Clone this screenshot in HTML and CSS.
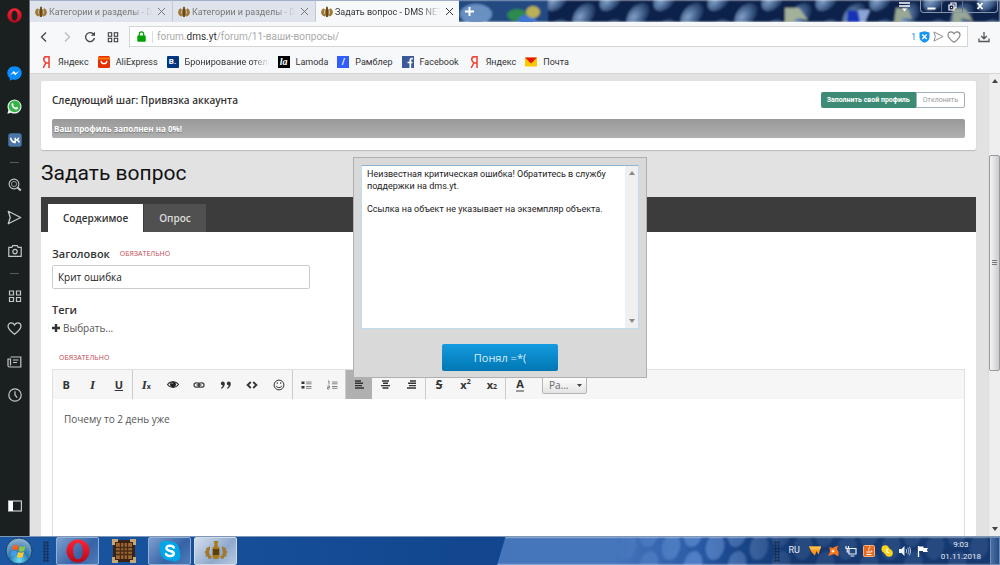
FILE: index.html
```html
<!DOCTYPE html>
<html lang="ru">
<head>
<meta charset="utf-8">
<title>Задать вопрос - DMS NETWORK</title>
<link rel="stylesheet" href="styles.css">
</head>
<body>
<svg class="defs" width="0" height="0" aria-hidden="true">
  <defs>
    <symbol id="laurel" viewBox="0 0 12 12"><path d="M2.600 2.200C1 3 .1 4.500.1 6.200c0 2.300 1.400 3.900 3.600 4.200l.6-1.200C3.600 8.300 3.400 7.200 3.400 6c0-1 .2-1.800.5-2.600zM9.400 2.200c1.600.8 2.500 2.300 2.500 4 0 2.300-1.400 3.900-3.600 4.200l-.6-1.200c.7-.9.9-2 .9-3.200 0-1-.2-1.800-.5-2.600z" fill="#a07a34"/><path d="M5.200.8h1.600l.2 2 .7 1.200v5L6.800 11H5.200l-.9-2V4L5 2.800z" fill="#6b4a12"/></symbol>
    <symbol id="close" viewBox="0 0 9 9"><path d="M1 1l7 7M8 1L1 8" stroke="currentColor" fill="none"/></symbol>
    <symbol id="grid" viewBox="0 0 14 14"><path d="M1.500 2h4v4h-4zM8.500 2h4v4h-4zM1.500 8.500h4v4h-4zM8.500 8.500h4v4h-4z" fill="none" stroke="currentColor" stroke-width="1.200"/></symbol>
    <symbol id="send" viewBox="0 0 14 14"><path d="M1.200 1.200L12.800 7 1.200 12.800 3 7z" fill="none" stroke="currentColor" stroke-width="1.200" stroke-linejoin="round"/></symbol>
    <symbol id="heart" viewBox="0 0 14 14"><path d="M7 12.300C3.500 9.700 1 7.700 1 4.900 1 3 2.300 1.800 3.900 1.800 5.300 1.800 6.300 2.500 7 3.700c.7-1.200 1.700-1.900 3.100-1.900C11.700 1.800 13 3 13 4.900c0 2.800-2.500 4.800-6 7.400z" fill="none" stroke="currentColor" stroke-width="1.200"/></symbol>
    <linearGradient id="operaRed" x1="0" y1="0" x2="0" y2="1"><stop offset="0" stop-color="#ff2436"/><stop offset="1" stop-color="#b5091b"/></linearGradient>
    <symbol id="opera" viewBox="0 0 24 24"><path fill-rule="evenodd" d="M12 .5a11.500 11.500 0 1 0 0 23 11.500 11.500 0 0 0 0-23zM12 3.800c3 0 4.700 3.700 4.700 8.200s-1.700 8.200-4.700 8.200S7.300 16.500 7.300 12 9 3.800 12 3.800z" fill="url(#operaRed)"/></symbol>
    <radialGradient id="ball" cx=".35" cy=".4" r=".65"><stop offset="0" stop-color="#86a1c6"/><stop offset=".5" stop-color="#4c6c97"/><stop offset="1" stop-color="#1d3560"/></radialGradient>
    <pattern id="balls" width="54" height="32" patternUnits="userSpaceOnUse">
      <rect width="54" height="32" fill="#10244c"/>
      <ellipse cx="14" cy="15" rx="14" ry="9" transform="rotate(-48 14 15)" fill="url(#ball)"/>
      <ellipse cx="41" cy="-1" rx="14" ry="9" transform="rotate(-48 41 -1)" fill="url(#ball)"/>
      <ellipse cx="41" cy="31" rx="14" ry="9" transform="rotate(-48 41 31)" fill="url(#ball)"/>
    </pattern>
    <pattern id="blobs" width="44" height="30" patternUnits="userSpaceOnUse">
      <rect width="44" height="30" fill="#1d4f9c"/>
      <ellipse cx="11" cy="10" rx="9" ry="13" transform="rotate(12 11 10)" fill="#5583c9"/>
      <ellipse cx="33" cy="-3" rx="9" ry="13" transform="rotate(12 33 -3)" fill="#5583c9"/>
      <ellipse cx="33" cy="27" rx="9" ry="13" transform="rotate(12 33 27)" fill="#5583c9"/>
    </pattern>
    <linearGradient id="barBlue"><stop offset="0" stop-color="#1b57a2"/><stop offset=".9" stop-color="#12478f"/></linearGradient>
    <linearGradient id="haze"><stop offset="0" stop-color="#4474ba"/><stop offset=".5" stop-color="#4474ba"/><stop offset="1" stop-color="#4474ba" stop-opacity="0"/></linearGradient>
    <linearGradient id="night"><stop offset="0" stop-color="#12305f" stop-opacity="0"/><stop offset="1" stop-color="#12305f" stop-opacity=".7"/></linearGradient>
    <filter id="soft"><feGaussianBlur stdDeviation="1"/></filter>
  </defs>
</svg>

<div class="window">
  <nav class="rail" aria-label="Боковая панель">
    <button class="rail-logo" aria-label="Opera"><svg width="15" height="15"><use href="#opera"/></svg></button>
    <button aria-label="Messenger"><svg width="15" height="15" viewBox="0 0 15 15"><path d="M7.500.3C3.400.3.300 3.200.300 7c0 2.100.9 3.900 2.400 5.100v2.600l2.300-1.300c.8.2 1.600.4 2.500.4 4.100 0 7.200-2.900 7.200-6.800S11.600.3 7.500.3z" fill="#0a8cff"/><path d="M2.900 9.200l3.900-4.100 2 2 3.400-2-3.900 4.100-2-2z" fill="#fff"/></svg></button>
    <button aria-label="WhatsApp"><svg width="15" height="15" viewBox="0 0 15 15"><path d="M.4 14.700l1-3.700A7 7 0 1 1 4.100 13.700z" fill="#e9f5ea"/><circle cx="7.600" cy="7.300" r="5.900" fill="#35b44a"/><path d="M5.200 4.100c.5-.4.800-.2 1 .3l.4 1c.1.400-.5.800-.4 1.100.6 1.100 1.200 1.600 2.300 2.100.4.100.7-.8 1.100-.6l1.200.6c.5.300.100 1.300-.4 1.600-1.100.7-3 .1-4.300-1.200C4.700 7.600 3.900 5.400 5.200 4.100z" fill="#fff"/></svg></button>
    <button aria-label="ВКонтакте"><svg width="14" height="14" viewBox="0 0 14 14"><rect x=".3" y=".3" width="13.400" height="13.400" rx="2.500" fill="#4a76a8"/><path d="M2.500 4.700c.7 2.900 2 4.700 4.700 4.700V4.700M7.200 7.300c1.700-.1 3-1 3.600-2.600M7.200 6.800c2 0 3.400 1 4.200 2.700" stroke="#fff" stroke-width="1.500" fill="none"/></svg></button>
    <hr>
    <button aria-label="Поиск"><svg width="14" height="14" viewBox="0 0 14 14" fill="none" stroke="currentColor" stroke-width="1.100"><circle cx="6" cy="6" r="4.900"/><circle cx="6" cy="6" r="2.600" stroke-width=".7"/><path d="M9.500 9.500l3.300 3" stroke-width="2.200"/></svg></button>
    <button aria-label="Отправить"><svg width="15" height="15"><use href="#send"/></svg></button>
    <button aria-label="Снимок"><svg width="14" height="14" viewBox="0 0 14 14" fill="none" stroke="currentColor" stroke-width="1.200"><path d="M.8 3.300h3l1-1.600h4.400l1 1.600h3v9H.8z"/><circle cx="7" cy="7.600" r="2.200"/></svg></button>
    <hr>
    <button aria-label="Экспресс-панель"><svg width="14" height="14"><use href="#grid"/></svg></button>
    <button aria-label="Закладки"><svg width="15" height="15"><use href="#heart"/></svg></button>
    <button aria-label="Новости"><svg width="15" height="14" viewBox="0 0 15 14" fill="none" stroke="currentColor" stroke-width="1.200"><path d="M3.500 2h10.300v10H2.500C1.500 12 1 11.500 1 10.500V4h2.500v6.500M6 5h5.500M6 7.500h4"/></svg></button>
    <button aria-label="История"><svg width="14" height="14" viewBox="0 0 14 14" fill="none" stroke="currentColor" stroke-width="1.200"><circle cx="7" cy="7" r="6.200"/><path d="M7 3.200V7l2.300 2.600"/></svg></button>
    <button class="rail-end" aria-label="Панель"><svg width="14" height="12" viewBox="0 0 14 12"><rect x=".6" y="1" width="12.800" height="10" fill="none" stroke="currentColor" stroke-width="1.200"/><path d="M1 1h4v10H1z" fill="#fff"/></svg></button>
  </nav>

  <div class="browser">
    <header class="tabstrip">
      <svg class="wallpaper" width="100%" height="100%" aria-hidden="true"><g filter="url(#soft)"><rect width="100%" height="100%" fill="url(#balls)"/><rect x="420" width="98" height="22" fill="#204a80"/><ellipse cx="446" cy="14" rx="16" ry="10" fill="#6a90c2"/><ellipse cx="487" cy="15" rx="10" ry="6" fill="#2d8a4e"/><ellipse cx="497" cy="20" rx="9" ry="5" fill="#3f74d0"/><ellipse cx="503" cy="12" rx="7" ry="6" fill="#b9b056"/><path d="M755 8l14 0 9 12-10-2-8 5h-5z" fill="#a3b09a"/><path d="M866 8l12 1 4 10-10-2v6h-8z" fill="#98a894"/><path d="M923 9l12 0 8 12-12-3v5h-8z" fill="#98a894"/><path d="M818 10l9 1 3 11h-13z" fill="#1233b8"/><path d="M828 10h12l-5 12h-5z" fill="#8aa5d8"/></g></svg>
      <div class="tabs">
        <div class="tab"><svg width="12" height="12"><use href="#laurel"/></svg><a href="#">Категории и разделы - DI</a><button aria-label="Закрыть"><svg width="9" height="9"><use href="#close"/></svg></button></div>
        <div class="tab"><svg width="12" height="12"><use href="#laurel"/></svg><a href="#">Категории и разделы - DI</a><button aria-label="Закрыть"><svg width="9" height="9"><use href="#close"/></svg></button></div>
        <div class="tab tab-on"><svg width="12" height="12"><use href="#laurel"/></svg><a href="#">Задать вопрос - DMS NET</a><button aria-label="Закрыть"><svg width="9" height="9"><use href="#close"/></svg></button></div>
        <button class="newtab" aria-label="Новая вкладка"><svg width="9" height="9" viewBox="0 0 9 9"><path d="M4.500 0v9M0 4.500h9" stroke="#fff" stroke-width="2"/></svg></button>
      </div>
      <div class="winctl">
        <button class="menu" aria-label="Меню вкладок"><svg width="11" height="10" viewBox="0 0 11 10"><path d="M0 1h11M0 4h11" stroke="#fff" stroke-width="1.500"/><path d="M3 6.500h5L5.500 9.500z" fill="#fff"/></svg></button>
        <div class="winbtns">
          <button aria-label="Свернуть"><svg width="9" height="9" viewBox="0 0 9 9"><path d="M.5 6.500h8" stroke="#fff" stroke-width="2"/></svg></button>
          <button aria-label="Развернуть"><svg width="9" height="9" viewBox="0 0 9 9" fill="none" stroke="#fff" stroke-width="1.200"><path d="M1 3h5v5H1zM3 3V1h5v5H6M3 5.500h1"/></svg></button>
          <button class="wide" aria-label="Закрыть окно"><svg width="8" height="8" viewBox="0 0 8 8"><path d="M1.500 1l5 6M6.500 1l-5 6" stroke="#fff" stroke-width="1.800"/></svg></button>
        </div>
      </div>
    </header>

    <div class="navbar">
      <button aria-label="Назад"><svg width="12" height="12" viewBox="0 0 12 12"><path d="M8 1.500L3.500 6 8 10.500" fill="none" stroke="#444" stroke-width="1.300"/></svg></button>
      <button aria-label="Вперёд"><svg width="12" height="12" viewBox="0 0 12 12"><path d="M4 1.500L8.500 6 4 10.500" fill="none" stroke="#bbb" stroke-width="1.300"/></svg></button>
      <button aria-label="Обновить"><svg width="12" height="12" viewBox="0 0 12 12"><path d="M9.800 3.500A4.500 4.500 0 1 0 10.500 7" fill="none" stroke="#444" stroke-width="1.300"/><path d="M11 .8v4H7z" fill="#444"/></svg></button>
      <button aria-label="Экспресс-панель"><svg width="12" height="12"><use href="#grid"/></svg></button>
      <div class="urlbar">
        <svg width="9" height="11" viewBox="0 0 9 11"><path d="M2.300 5V3a2.200 2.200 0 0 1 4.400 0v2" fill="none" stroke="#00a000" stroke-width="1.200"/><rect x=".3" y="4.500" width="8.400" height="6.200" rx=".6" fill="#00a000"/></svg>
        <span class="url" role="textbox" aria-label="Адрес">forum.<b>dms.yt</b>/forum/11-ваши-вопросы/</span>
        <span class="blocked">1</span>
        <svg width="11" height="12" viewBox="0 0 11 12"><path d="M5.500.3l5 1.200v4.800c0 2.700-2.300 4.600-5 5.500-2.700-.9-5-2.800-5-5.500V1.500z" fill="#1696f0"/><path d="M3.300 3.500l4.400 4.400M7.700 3.500L3.300 7.900" stroke="#fff" stroke-width="1.400"/></svg>
        <svg class="gray" width="11" height="11"><use href="#send"/></svg>
        <svg class="gray" width="14" height="14"><use href="#heart"/></svg>
      </div>
      <button aria-label="Загрузки"><svg width="12" height="12" viewBox="0 0 12 12" fill="none" stroke="#555" stroke-width="1.300"><path d="M1 7.500v3h10v-3M6 1v6.500M3.200 5L6 7.800 8.800 5"/></svg></button>
    </div>

    <nav class="bookmarks" aria-label="Закладки">
      <a href="#"><svg width="12" height="12" viewBox="0 0 12 12"><path d="M9 12V.7H6.500c-1.700 0-2.800 1.200-2.800 2.900 0 1.600.9 2.300 2.200 3.200L3.200 12M9 7H6.300" fill="none" stroke="#f43b2f" stroke-width="1.500"/></svg>Яндекс</a>
      <a href="#"><svg width="12" height="12" viewBox="0 0 12 12"><rect width="12" height="12" rx="1.500" fill="#e62e04"/><path d="M0 1.500h12v2H0z" fill="#ff7a00"/><path d="M3 5c.8 3.600 5.200 3.600 6 0" fill="none" stroke="#fff" stroke-width="1.300"/></svg>AliExpress</a>
      <a href="#"><span class="ico booking">B.</span><span class="fade">Бронирование отеле</span></a>
      <a href="#"><span class="ico lamoda">la</span>Lamoda</a>
      <a href="#"><span class="ico rambler">/</span>Рамблер</a>
      <a href="#"><svg width="12" height="12" viewBox="0 0 12 12"><rect width="12" height="12" fill="#3b5998"/><path d="M8.300 12V3.900c0-.8.5-1.200 1.200-1.200h1.300M5.500 6.500h5" fill="none" stroke="#fff" stroke-width="1.700"/></svg>Facebook</a>
      <a href="#"><svg width="12" height="12" viewBox="0 0 12 12"><path d="M9 12V.7H6.500c-1.700 0-2.800 1.200-2.800 2.900 0 1.600.9 2.300 2.200 3.200L3.200 12M9 7H6.300" fill="none" stroke="#f43b2f" stroke-width="1.500"/></svg>Яндекс</a>
      <a href="#"><svg width="12" height="12" viewBox="0 0 12 12"><rect y="1.500" width="12" height="9" fill="#ffc800"/><path d="M0 1.500h12L6 7.500z" fill="#e61400"/></svg>Почта</a>
    </nav>

    <div class="viewport">
      <main class="page">
        <section class="card">
          <div class="card-head">
            <h2>Следующий шаг: Привязка аккаунта</h2>
            <div class="btns"><button class="fill">Заполнить свой профиль</button><button class="dismiss">Отклонить</button></div>
          </div>
          <div class="progress">Ваш профиль заполнен на 0%!</div>
        </section>

        <h1>Задать вопрос</h1>

        <div class="formtabs"><button class="on">Содержимое</button><button>Опрос</button></div>
        <form class="panel">
          <div class="field-head"><label for="title">Заголовок</label><span class="req">ОБЯЗАТЕЛЬНО</span></div>
          <input id="title" type="text" value="Крит ошибка">
          <div class="field-head tags">Теги</div>
          <a class="choose" href="#"><svg width="8" height="8" viewBox="0 0 8 8"><path d="M4 0v8M0 4h8" stroke="#333" stroke-width="2.400"/></svg>Выбрать...</a>
          <div class="req body-req">ОБЯЗАТЕЛЬНО</div>
          <div class="editor">
            <div class="tools">
              <div class="grp g3">
                <button type="button" aria-label="Полужирный"><b>B</b></button>
                <button type="button" aria-label="Курсив"><i class="serif">I</i></button>
                <button type="button" aria-label="Подчёркнутый"><u>U</u></button>
              </div>
              <div class="grp g6">
                <button type="button" aria-label="Очистить формат"><i class="serif">I</i><sub>x</sub></button>
                <button type="button" aria-label="Скрытый текст"><svg width="12" height="9" viewBox="0 0 12 9"><path d="M.5 4.500C3 .8 9 .8 11.500 4.500 9 8.200 3 8.200.5 4.500z" fill="none" stroke="#333" stroke-width="1.200"/><circle cx="6" cy="4.300" r="2.900" fill="#222"/><circle cx="5.200" cy="3.300" r=".8" fill="#999"/></svg></button>
                <button type="button" aria-label="Ссылка"><svg width="12" height="8" viewBox="0 0 12 8" fill="none" stroke="#444" stroke-width="1.300"><rect x="1" y="1.800" width="5.500" height="4.400" rx="2.200"/><rect x="5.500" y="1.800" width="5.500" height="4.400" rx="2.200"/><path d="M3.500 4h5"/></svg></button>
                <button type="button" aria-label="Цитата"><svg width="12" height="8" viewBox="0 0 12 8" fill="#333"><path d="M.8 2.400A1.900 1.900 0 1 1 4.800 2.800C4.700 5.100 3.500 6.900 1.400 7.800L.9 6.900C2.100 6.300 2.700 5.500 2.800 4.300 1.600 4.300.8 3.500.8 2.400zM6.800 2.400A1.900 1.900 0 1 1 10.800 2.800C10.700 5.100 9.500 6.900 7.400 7.800L6.900 6.900C8.100 6.300 8.700 5.500 8.800 4.300 7.600 4.300 6.800 3.500 6.800 2.400z"/></svg></button>
                <button type="button" aria-label="Код"><svg width="12" height="8" viewBox="0 0 12 8"><path d="M4.800 1L1.600 4l3.200 3M7.200 1l3.200 3-3.200 3" fill="none" stroke="#333" stroke-width="1.800"/></svg></button>
                <button type="button" aria-label="Смайлик"><svg width="12" height="12" viewBox="0 0 12 12" fill="none" stroke="#333"><circle cx="6" cy="6" r="4.900"/><path d="M3.200 6.800c.7 2.400 4.900 2.400 5.600 0M4.300 3.300v1.600M7.700 3.300v1.600"/></svg></button>
              </div>
              <div class="grp g2">
                <button type="button" aria-label="Список"><svg width="11" height="10" viewBox="0 0 11 10"><path d="M.5 1.500h3v2.500h-3zM.5 6h3v2.500h-3z" fill="#333"/><path d="M5 2h5.500M5 3.800h5.500M5 6.500h5.500M5 8.300h5.500" stroke="#666" stroke-width=".8"/></svg></button>
                <button type="button" aria-label="Нумерованный список"><svg width="11" height="10" viewBox="0 0 11 10" fill="none" stroke="#666" stroke-width=".8"><path d="M1 1h1v3.500M.5 6h2v1.500h-2V9h2M5 2h5.500M5 3.800h5.500M5 6.500h5.500M5 8.300h5.500"/></svg></button>
              </div>
              <div class="grp g3">
                <button type="button" class="pressed" aria-label="По левому краю"><svg width="9" height="9" viewBox="0 0 9 9"><path d="M0 1h6M0 3.300h8M0 5.600h7M0 8h9" stroke="#333" stroke-width="1.400"/></svg></button>
                <button type="button" aria-label="По центру"><svg width="9" height="9" viewBox="0 0 9 9"><path d="M1 1h7M2 3.300h5M0 5.600h9M1.500 8h6" stroke="#333" stroke-width="1.400"/></svg></button>
                <button type="button" aria-label="По правому краю"><svg width="9" height="9" viewBox="0 0 9 9"><path d="M3 1h6M1 3.300h8M2 5.600h7M0 8h9" stroke="#333" stroke-width="1.400"/></svg></button>
              </div>
              <div class="grp g3">
                <button type="button" aria-label="Зачёркнутый"><s>S</s></button>
                <button type="button" aria-label="Верхний индекс"><b>x</b><sup>2</sup></button>
                <button type="button" aria-label="Нижний индекс"><b>x</b><sub>2</sub></button>
              </div>
              <div class="grp g1">
                <button type="button" aria-label="Цвет"><span class="color">A</span></button>
              </div>
              <select class="size" aria-label="Размер"><option>Ра...</option></select>
            </div>
            <div class="text" contenteditable="true">Почему то 2 день уже</div>
          </div>
        </form>
      </main>
      <div class="scroll">
        <svg width="6" height="4" viewBox="0 0 6 4"><path d="M0 4h6L3 0z" fill="#444"/></svg>
        <div class="track"><div class="thumb"></div></div>
        <svg width="6" height="4" viewBox="0 0 6 4"><path d="M0 0h6L3 4z" fill="#444"/></svg>
      </div>
    </div>
  </div>
</div>

<footer class="taskbar">
  <svg class="wallpaper" width="100%" height="100%" aria-hidden="true">
    <g filter="url(#soft)">
      <rect width="100%" height="100%" fill="url(#blobs)"/>
      <rect x="495" width="240" height="100%" fill="url(#haze)"/>
      <rect x="700" width="90" height="100%" fill="url(#night)"/>
      <rect x="790" width="100%" height="100%" fill="#12305f" opacity=".7"/>
    </g>
    <path d="M-5-2h511l-10 34H-5z" fill="url(#barBlue)"/>
  </svg>
  <button class="start" aria-label="Пуск"><svg width="28" height="28" viewBox="0 0 28 28"><defs><radialGradient id="orb" cx=".5" cy=".85" r=".8"><stop offset="0" stop-color="#6fe0f5"/><stop offset=".45" stop-color="#2a79b4"/><stop offset="1" stop-color="#8fb2cc"/></radialGradient></defs><circle cx="14" cy="14" r="13" fill="url(#orb)" stroke="#1b4068"/><path d="M8 8.500c2-1.200 4-1 5.600 0l-1.200 4.900c-1.800-1-3.600-1-5.600 0z" fill="#f0642a"/><path d="M14.700 9c1.800 1 3.700 1 5.700-.1L19.200 14c-2 1-3.900 1-5.700 0z" fill="#8cc63e"/><path d="M6.500 14.500c2-1.100 3.900-1 5.600 0l-1.200 4.900c-1.800-1-3.700-1-5.600 0z" fill="#3f9fe8"/><path d="M13.200 15c1.800 1 3.700 1 5.700 0L17.700 20c-2 1.100-3.900 1-5.700 0z" fill="#fdc92e"/></svg></button>
  <span class="grip"></span>
  <div class="apps">
    <button aria-label="Opera"><svg width="24" height="24"><use href="#opera"/></svg></button>
    <button class="bare" aria-label="Minecraft"><svg width="24" height="24" viewBox="0 0 24 24"><rect x="1" y="1" width="22" height="22" fill="#3a2312"/><path d="M0 0h6v3H3v3H0zM24 0h-6v3h3v3h3zM0 24h6v-3H3v-3H0zM24 24h-6v-3h3v-3h3z" fill="#c6a877"/><rect x="4" y="4" width="16" height="16" fill="#9a6737"/><path d="M4 8.500h16M4 12h16M4 15.500h16M8.500 4v16M12 4v16M15.500 4v16" stroke="#4a2c14" stroke-width="1.300"/></svg></button>
    <button aria-label="Skype"><svg width="24" height="24" viewBox="0 0 24 24"><circle cx="12" cy="12" r="9.800" fill="#00a6e6"/><circle cx="7.500" cy="7.500" r="6" fill="#00a6e6"/><circle cx="16.500" cy="16.500" r="6" fill="#00a6e6"/><path d="M15.800 8.600C14.800 6.300 8.500 6 8.500 9.300c0 3.600 7.300 1.700 7.300 5.200 0 3.300-6.600 3.200-7.800.5" fill="none" stroke="#fff" stroke-width="2.500" stroke-linecap="round"/></svg></button>
    <button class="active" aria-label="DMS"><svg width="24" height="22" viewBox="0 0 24 22"><path d="M6 6L4 7.500 2 8l.3 2L.5 12l1.300 2-.3 2.200 2.300.6.7 2.200 2.500-.5L8 17l-2-2-1-3 1-2.500zM18 6l2 1.500 2 .5-.3 2 1.800 2-1.300 2 .3 2.200-2.300.6-.7 2.200-2.500-.5L16 17l2-2 1-3-1-2.500z" fill="#a07a30"/><path d="M9.500 1h5l-.8 2v3l2 2v8l-1.500 3H9.800l-1.500-3V8l2-2V3z" fill="#a97a1c"/><path d="M9 9h6v6H9z" fill="#5a3f12"/></svg></button>
  </div>
  <div class="tray">
    <span class="grip"></span>
    <span class="lang">RU</span>
    <svg width="12" height="12" viewBox="0 0 12 12"><path d="M0 1.500h12L9.500 9.500 7.300 6 6 10.500 2.500 7z" fill="#ff9a1a"/><path d="M0 1.500h12L11 4.500H2z" fill="#ffc04a"/></svg>
    <svg width="12" height="12" viewBox="0 0 12 12"><path d="M2.500 2l3 1L11 .5l-1 4 1.700 2.500-.5 4.500L7 9 1 11l2-4z" fill="#ff7418"/><circle cx="6" cy="6" r="1.500" fill="#ffe2c8"/></svg>
    <svg width="12" height="12" viewBox="0 0 12 12" fill="none" stroke="#e8eef5" stroke-width="1.200"><path d="M4 3.500h7v5.500H4zM5.500 11h4M1 1v2.500h2.500V1M2.200 3.500V7H4"/></svg>
    <svg width="12" height="12" viewBox="0 0 12 12"><rect x=".5" y=".5" width="11" height="11" rx="1" fill="#e8681c" stroke="#f7b27c"/><path d="M6.500 1.500c1.300 1.500-2 2.200-.6 4M3.500 7h4.500c1.300 0 1.200-1.200.3-1.300M3.500 9.500h5" stroke="#fff" fill="none"/></svg>
    <svg width="12" height="12" viewBox="0 0 12 12"><circle cx="4.200" cy="4" r="3.700" fill="#fbd51c"/><circle cx="8" cy="8" r="3.800" fill="#fbd51c"/><circle cx="6" cy="6" r="3.500" fill="#fbd51c"/><path d="M6 3.500V7l2 1" stroke="#fff" stroke-width="1.200" fill="none"/></svg>
    <svg width="12" height="12" viewBox="0 0 12 12"><path d="M0 4h2.500L5.500 1v10L2.500 8H0z" fill="#eef3f8"/><path d="M7 4c.9 1.200.9 2.800 0 4M8.700 2.700c1.500 2 1.500 4.600 0 6.600M10.300 1.700c1.700 2.600 1.700 6 0 8.600" fill="none" stroke="#dfe8f2" stroke-width=".8"/></svg>
    <svg width="12" height="12" viewBox="0 0 12 12"><path d="M1.500 1v11" stroke="#fff" stroke-width="1.300"/><path d="M2 1.500h4.500V3H11L9.800 5 11 7H6V6H2z" fill="#fff"/></svg>
    <div class="clock"><span>9:03</span><span>01.11.2018</span></div>
    <button class="desktop" aria-label="Показать рабочий стол"></button>
  </div>
</footer>

<div class="dialog" role="alertdialog" aria-label="Ошибка">
  <div class="msg">
    <div class="msg-text"><p>Неизвестная критическая ошибка! Обратитесь в службу поддержки на dms.yt.</p><p>Ссылка на объект не указывает на экземпляр объекта.</p></div>
    <div class="msg-bar"><svg width="6" height="4" viewBox="0 0 6 4"><path d="M0 4h6L3 0z" fill="#888"/></svg><svg width="6" height="4" viewBox="0 0 6 4"><path d="M0 0h6L3 4z" fill="#888"/></svg></div>
  </div>
  <button class="ok">Понял =*(</button>
</div>
</body>
</html>
```
FILE: styles.css
```css
* { box-sizing: border-box; }
body {
  margin: 0;
  height: 100vh;
  display: flex;
  flex-direction: column;
  overflow: hidden;
  font: 9px/12px Roboto, "Noto Sans", sans-serif;
  color: #333;
}
.defs { position: absolute; }
button {
  border: 0;
  padding: 0;
  background: none;
  font: inherit;
  color: inherit;
  display: flex;
  align-items: center;
  justify-content: center;
}
a { color: inherit; text-decoration: none; }
svg { flex: none; display: block; }
.wallpaper { position: absolute; inset: 0; z-index: -1; }

.window { flex: 1; min-height: 0; display: flex; }

.rail {
  width: 30px;
  flex: none;
  background: #1a1f20;
  border-right: 1px solid #6d7071;
  color: #c4c8c9;
  display: flex;
  flex-direction: column;
  padding-bottom: 14px;
}
.rail button { height: 33px; flex: none; }
.rail .rail-logo { height: 30px; margin-bottom: 27px; }
.rail .rail-end { margin-top: auto; }
.rail hr { width: 9px; height: 12px; margin: 0 auto; border: 0; flex: none; background: linear-gradient(#555a5b, #555a5b) center / 100% 1px no-repeat; }

.browser { flex: 1; min-width: 0; display: flex; flex-direction: column; }
.tabstrip { position: relative; z-index: 0; height: 22px; display: flex; justify-content: space-between; }
.tabs { display: flex; }
.tab {
  width: 143px;
  display: flex;
  align-items: center;
  gap: 2px;
  padding: 0 7px 0 5px;
  background: #dfe3ec;
  border-top: 1px solid #9fb0c8;
  border-right: 1px solid #c3c7cf;
  color: #777;
}
.tab a {
  flex: 1;
  white-space: nowrap;
  -webkit-mask-image: linear-gradient(90deg, #000 78%, transparent 98%);
  mask-image: linear-gradient(90deg, #000 78%, transparent 98%);
}
.tab-on { background: #f7f8fa; color: #333; border-right: 0; }
.newtab { width: 20px; }
.winctl { display: flex; gap: 10px; padding-right: 2px; align-items: flex-start; }
.menu { height: 14px; }
.winbtns { display: flex; height: 13px; border: 1px solid #8796ab; border-top: 0; border-radius: 0 0 4px 4px; }
.winbtns button { width: 21px; border-right: 1px solid #5d6f8b; }
.winbtns .wide { width: 34px; border: 0; }

.navbar { background: #f7f8fa; display: flex; align-items: center; padding: 4px 10px 3px 8px; gap: 11px; }
.urlbar {
  flex: 1;
  height: 21px;
  display: flex;
  align-items: center;
  gap: 3px;
  padding: 0 6px 0 7px;
  margin: 0 -1px;
  background: #fff;
  border: 1px solid #d4d6d6;
}
.url { flex: 1; margin-left: 3px; padding-left: 4px; border-left: 1px solid #ddd; font-size: 10px; color: #aaa; }
.url b { font-weight: 400; color: #333; }
.blocked { color: #1696f0; }
.gray { color: #888; }

.bookmarks { background: #f7f8fa; height: 24px; display: flex; align-items: center; gap: 9px; padding: 0 10px; border-bottom: 1px solid #d5d6d8; white-space: nowrap; }
.bookmarks a { display: flex; align-items: center; gap: 6px; }
.ico { width: 12px; height: 12px; text-align: center; color: #fff; }
.booking { background: #003580; font-weight: 700; font-size: 8px; border-radius: 1px; }
.lamoda { background: #000; font: italic 700 10px/12px "Liberation Serif", serif; }
.rambler { background: #315efb; font-weight: 700; }
.fade { width: 84px; -webkit-mask-image: linear-gradient(90deg, #000 80%, transparent); mask-image: linear-gradient(90deg, #000 80%, transparent); }

.viewport { flex: 1; min-height: 0; display: flex; background: #e2e2e2; }
.page { flex: 1; min-width: 0; display: flex; flex-direction: column; padding: 7px 12px 0 11px; overflow: hidden; font-family: "Open Sans", "Noto Sans", sans-serif; }
.card { background: #fff; border-radius: 2px; box-shadow: 0 1px 1px #bbb; padding: 11px 11px 12px; flex: none; }
.card-head { display: flex; justify-content: space-between; align-items: center; height: 16px; margin-bottom: 11px; }
h2 { margin: 0; font-size: 10px; line-height: 14px; font-weight: 600; color: #333; }
.btns { display: flex; height: 16px; font: 7px/10px Roboto, sans-serif; }
.btns .fill { background: #3d8b75; color: #fff; font-weight: 700; padding: 0 6px; border-radius: 2px 0 0 2px; }
.btns .dismiss { border: 1px solid #a5b0bf; color: #999; padding: 0 6px; border-radius: 0 2px 2px 0; }
.progress { height: 19px; padding: 0 2px; border-radius: 2px; background: linear-gradient(#999, #b0b0b0); color: #fff; font-size: 8px; line-height: 19px; font-weight: 700; text-shadow: 0 1px 1px #777; }
h1 { margin: 11px 0; font: 400 21px/25px Roboto, sans-serif; color: #111; flex: none; }

.formtabs { display: flex; gap: 1px; background: #3c3c3c; padding: 7px 7px 0; flex: none; }
.formtabs button { height: 28px; padding: 0 15px; background: #505050; color: #ddd; font-size: 10px; font-weight: 600; }
.formtabs .on { background: #fff; color: #333; }
.panel { flex: 1; min-height: 0; background: #fff; padding: 14px 11px 0; display: flex; flex-direction: column; align-items: flex-start; }
.field-head { font-size: 11px; line-height: 16px; font-weight: 600; display: flex; gap: 10px; }
.req { font-size: 7px; font-weight: 400; color: #c2494f; }
.panel input { width: 258px; height: 24px; margin: 3px 0 13px; padding: 0 5px; border: 1px solid #ccc; border-radius: 2px; font: 10px "Open Sans", sans-serif; color: #222; flex: none; }
.choose { display: flex; align-items: center; gap: 3px; font-size: 10px; line-height: 16px; color: #555; margin-top: 2px; }
.body-req { margin: 16px 7px 5px; }
.editor { flex: 1; align-self: stretch; border: 1px solid #e0e0e0; border-bottom: 0; }
.tools { display: flex; height: 29px; background: #f6f6f6; font-size: 11px; color: #333; }
.grp { display: flex; border-right: 1px solid #ccc; }
.grp button { flex: 1; }
.g3 { width: 80px; }
.g6 { width: 160px; }
.g2 { width: 53px; }
.g1 { width: 28px; border: 0; }
.tools u, .tools s, .color { font-weight: 700; }
.tools s { font-size: 12px; }
.serif { font: italic 700 13px "Liberation Serif", serif; }
.tools sub, .tools sup { font-size: 7px; line-height: 8px; font-weight: 700; }
.tools sub { align-self: flex-end; margin-bottom: 8px; }
.tools sup { align-self: flex-start; margin-top: 8px; }
.color { line-height: 12px; border-bottom: 2px solid #999; }
.pressed { background: #b0b0b0; }
.size { width: 45px; height: 18px; margin: 6px 0 0 8px; padding: 0 6px; border: 1px solid #b5b5b5; border-radius: 2px; appearance: none; font: 10px "Open Sans", sans-serif; color: #666; background: url("data:image/svg+xml,%3Csvg xmlns='http://www.w3.org/2000/svg' width='5' height='3'%3E%3Cpath d='M0 0h5L2.500 3z' fill='%23444'/%3E%3C/svg%3E") right 4px center no-repeat, linear-gradient(#fff, #e4e4e4); }
.text { padding: 12px 11px; font-size: 10px; line-height: 16px; color: #555; outline: 0; }

.scroll { width: 12px; flex: none; background: #eee; border-left: 1px solid #ddd; display: flex; flex-direction: column; align-items: center; padding: 5px 0; }
.track { flex: 1; width: 100%; padding-top: 72px; }
.thumb { height: 58%; border: 1px solid #999; border-radius: 2px; background: repeating-linear-gradient(#777 0 1px, transparent 1px 2px) center / 5px 5px no-repeat, linear-gradient(90deg, #f5f5f5, #c9cbcf); }

.taskbar { position: relative; z-index: 0; height: 29px; display: flex; align-items: center; border-top: 1px solid #7f96b4; padding-left: 5px; }
.grip { width: 6px; height: 21px; background: radial-gradient(circle, #0a2347 1px, #4d78b0 2px) 0 0 / 3px 3px; opacity: .6; }
.start { margin-right: 10px; }
.apps { display: flex; gap: 3px; margin-left: 7px; height: 28px; }
.apps button { width: 43px; border: 1px solid #8fb0d8; border-radius: 2px; background: linear-gradient(135deg, #7d9fce, #3563a6 60%, #4f7cb8); }
.apps .bare { border-color: transparent; background: none; }
.apps .active { background: linear-gradient(135deg, #d6dfec, #8fa9cc 60%, #b7c8de); border-color: #cfdcec; }
.tray { margin-left: auto; align-self: stretch; display: flex; align-items: center; gap: 6px; color: #e6edf6; }
.lang { margin: 0 3px 3px 2px; }
.clock { display: flex; flex-direction: column; align-items: center; font-size: 8px; margin: 0 3px 0 6px; }
.desktop { align-self: stretch; width: 10px; border: 1px solid #6f8db5; background: linear-gradient(90deg, #4a6fa3, #264c86); }

.dialog {
  position: absolute;
  top: 157px;
  left: 50%;
  width: 294px;
  transform: translateX(-50%);
  padding: 7px 7px 6px;
  background: #d9d9d9;
  border: 1px solid #b0b0b0;
  display: flex;
  flex-direction: column;
  align-items: center;
  gap: 15px;
}
.msg { align-self: stretch; height: 164px; display: flex; background: #fff; border: 1px solid #c0dcec; border-top-color: #8db4d2; }
.msg-text { flex: 1; padding: 2px 5px; color: #222; }
.msg-text p { margin: 0 0 11px; }
.msg-bar { width: 13px; background: #f0f0f0; display: flex; flex-direction: column; align-items: center; justify-content: space-between; padding: 5px 0; }
.ok { width: 116px; height: 27px; border-radius: 2px; background: linear-gradient(#149bdf, #0077b3); color: #d8eefa; font: 11px "Open Sans", sans-serif; }
```
